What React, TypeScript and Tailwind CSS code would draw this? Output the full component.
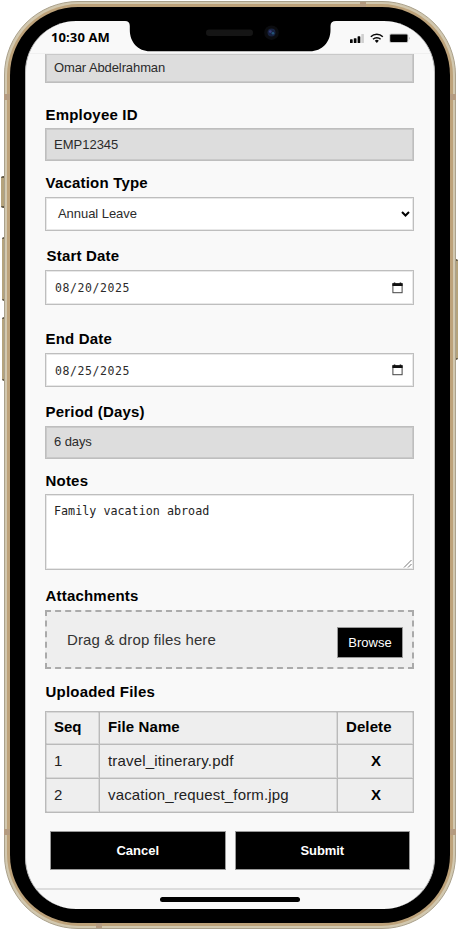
import React from "react";

function Label({ children, className = "" }: { children: React.ReactNode; className?: string }) {
  return (
    <label className={"block h-5 whitespace-nowrap pl-[0.5px] text-[15px] leading-5 font-bold tracking-[0.2px] text-black " + className}>
      {children}
    </label>
  );
}

function Field({ children, className = "" }: { children: React.ReactNode; className?: string }) {
  return (
    <div className={"flex items-center border border-[#bebebe] whitespace-nowrap text-[#2b2b2b] shadow-[inset_0_0_0_1px_rgba(0,0,0,0.09)] " + className}>
      {children}
    </div>
  );
}

function CalendarIcon() {
  return (
    <svg className="mt-[-3px] mr-[10px] ml-auto h-3 w-[11px]" viewBox="0 0 11 12">
      <rect x="0.9" y="1.8" width="9.2" height="8.9" fill="none" stroke="#444" strokeWidth="1" />
      <path d="M0.4 1.3H10.6V3.9H0.4ZM1.8 0.4h1.5v1.2H1.8ZM7.7 0.4h1.5v1.2H7.7Z" fill="#111" />
    </svg>
  );
}

function StatusIcons() {
  return (
    <svg className="mt-px ml-auto h-[14px] w-[64px]" viewBox="0 0 64 14">
      <g fill="#050505">
        <rect x="1" y="8.3" width="2.7" height="3.7" rx="0.6" />
        <rect x="4.8" y="7.2" width="2.7" height="4.8" rx="0.6" />
        <rect x="8.6" y="5.3" width="2.7" height="6.7" rx="0.6" />
        <rect x="12.3" y="3" width="2.6" height="9" rx="0.6" fill="#cfcfcf" />
      </g>
      <g fill="none" stroke="#080808" strokeWidth="1.5">
        <path d="M21.8 5.7a8.6 8.6 0 0 1 12 0" />
        <path d="M24 8.2a5.5 5.5 0 0 1 7.6 0" />
      </g>
      <path d="M27.8 11.9l-2-2.1a2.9 2.9 0 0 1 4 0Z" fill="#080808" />
      <rect x="40.2" y="2.5" width="19.2" height="9.4" rx="2" fill="#c8c8c8" />
      <rect x="41.2" y="3.5" width="17.2" height="7.4" rx="1" fill="#000" />
      <path d="M60.2 5.7q1.4 1.5 0 3Z" fill="#999" />
    </svg>
  );
}

function Notch() {
  return (
    <svg className="absolute top-[-1px] left-[99px] h-[33px] w-[211px]" viewBox="0 0 211 33">
      <path d="M0 0H211V1Q205.5 1 205.5 6V10C205.5 22 197 31.3 185 31.3H25C13 31.3 4.8 22 4.8 10V6Q4.8 1 0 1Z" fill="#000" />
      <rect x="81" y="9.5" width="47" height="6.5" rx="3.2" fill="#151515" />
      <circle cx="146.5" cy="12.7" r="7.3" fill="#0b0c0f" />
      <circle cx="146.5" cy="12.5" r="4" fill="#17213f" />
      <circle cx="145.3" cy="11.6" r="1.4" fill="#343c78" />
      <circle cx="148" cy="13.2" r="1.3" fill="#245578" />
    </svg>
  );
}

function Files() {
  const files = ["travel_itinerary.pdf", "vacation_request_form.jpg"];
  return (
    <div className="mt-[9px] grid h-[102px] grid-cols-[54px_238px_76px] grid-rows-[33px_34px_34px] border-t border-l border-[#bababa] bg-[#eee] text-[15px] whitespace-nowrap text-[#222] shadow-[inset_1px_1px_0_rgba(0,0,0,0.09)] *:flex *:items-center *:border-r *:border-b *:border-[#bababa] *:pb-px *:pl-2 *:shadow-[inset_-1px_-1px_0_rgba(0,0,0,0.09)]">
      <div className="font-bold text-black">Seq</div>
      <div className="font-bold tracking-[0.1px] text-black">File Name</div>
      <div className="font-bold tracking-[0.1px] text-black">Delete</div>
      {files.map((file, i) => (
        <React.Fragment key={file}>
          <div>{i + 1}</div>
          <div className="tracking-[0.16px]">{file}</div>
          <div className="justify-center pr-[7px] text-[15px] font-bold text-black">X</div>
        </React.Fragment>
      ))}
    </div>
  );
}

export default function App() {
  return (
    <div className="relative h-[929px] w-[458px] overflow-hidden bg-white font-['Liberation_Sans',Arial,sans-serif]">
      <div className="absolute top-[176px] left-[1px] h-[32px] w-[5px] rounded-l-xs border-y-2 border-[#655b46] bg-[#b5a37c]" />
      <div className="absolute top-[237px] left-[2px] h-[64px] w-[5px] rounded-l-xs border-y-2 border-[#655b46] bg-[#b5a37c]" />
      <div className="absolute top-[317px] left-[2px] h-[64px] w-[5px] rounded-l-xs border-y-2 border-[#655b46] bg-[#b5a37c]" />
      <div className="absolute top-[259px] left-[453px] h-[101px] w-[5px] rounded-r-xs border-y-2 border-[#655b46] bg-[#b5a37c]" />
      <div className="relative ml-1 h-full pt-px">
        <div className="h-[928px] w-[452px] rounded-[74px] border border-[#aaa18c] bg-[#d2c8af] p-[2px]">
          <div className="h-full rounded-[72px] bg-[#bda27a] p-[3px]">
            <div className="h-full rounded-[68px] bg-black pt-[14px] pl-[15px]">
              <main className="relative flex h-[888px] w-[410px] flex-col overflow-hidden rounded-[51px] border-x border-[#bbb] bg-[#f9f9f9]">
                <Notch />
                <header className="flex h-[33px] shrink-0 items-center border-b border-[#f0f0f0] pr-[21px] pl-[25px]">
                  <span className="mt-px font-['Open_Sans',sans-serif] text-[13px] font-bold tracking-[0.1px] whitespace-nowrap text-black">10:30 AM</span>
                  <StatusIcons />
                </header>
                <section className="ml-[19px] w-[369px]">
                  <Field className="h-[29px] border-t-0 bg-[#ddd] pb-[1px] pl-[8px] text-[13px] tracking-[-0.1px]">Omar Abdelrahman</Field>
                  <Label className="mt-[22px]">Employee ID</Label>
                  <Field className="mt-[3px] h-[33px] bg-[#ddd] pl-[8px] text-[13px]">EMP12345</Field>
                  <Label className="mt-[12px]">Vacation Type</Label>
                  <Field className="mt-[4px] h-[34px] bg-white pl-[12px] text-[13px] tracking-[-0.05px]">
                    Annual Leave
                    <svg className="mr-[3px] ml-auto h-2 w-[9px]" viewBox="0 0 9 8">
                      <path d="M1 2L4.5 5.5L8 2" fill="none" stroke="#000" strokeWidth="2" />
                    </svg>
                  </Field>
                  <Label className="mt-[15px] pl-[1.5px]">Start Date</Label>
                  <Field className="mt-[4px] h-[35px] bg-white pt-[3px] pl-[9px] font-['DejaVu_Sans_Mono',monospace] text-[11.5px] tracking-[0.57px]">
                    08/20/2025
                    <CalendarIcon />
                  </Field>
                  <Label className="mt-[24px]">End Date</Label>
                  <Field className="mt-[4px] h-[34px] bg-white pt-[3px] pl-[9px] font-['DejaVu_Sans_Mono',monospace] text-[11.5px] tracking-[0.57px]">
                    08/25/2025
                    <CalendarIcon />
                  </Field>
                  <Label className="mt-[15px]">Period (Days)</Label>
                  <Field className="mt-[4px] h-[33px] bg-[#ddd] pb-px pl-[8px] text-[13px] tracking-[-0.1px]">6 days</Field>
                  <Label className="mt-[12px]">Notes</Label>
                  <div className="mt-[3px] flex h-[76px] border border-[#bebebe] bg-white pt-[8px] pl-[8px] font-['DejaVu_Sans_Mono',monospace] text-[11.7px] leading-4 tracking-[0.02px] whitespace-nowrap text-[#222] shadow-[inset_0_0_0_1px_rgba(0,0,0,0.09)]">
                    Family vacation abroad
                    <svg className="mt-auto mr-px mb-px ml-auto h-[9px] w-[9px]" viewBox="0 0 9 9">
                      <path d="M1 8.5L8.5 1M5 8.5L8.5 5" stroke="#777" strokeWidth="1" />
                    </svg>
                  </div>
                  <Label className="mt-[16px]">Attachments</Label>
                  <div className="mt-[4px] flex h-[59px] items-center border-2 border-dashed border-[#aaa] bg-[#eee] pr-[9px] pl-[20px]">
                    <span className="mt-px text-[15px] tracking-[0.14px] whitespace-nowrap text-[#333]">Drag &amp; drop files here</span>
                    <button className="mt-[6px] ml-auto h-[31px] w-[66px] border border-[#999] bg-black text-[13px] text-white">Browse</button>
                  </div>
                  <Label className="mt-[13px]">Uploaded Files</Label>
                  <Files />
                </section>
                <div className="mt-[18px] ml-[24px] grid w-[360px] grid-cols-2 gap-[9px] text-[13px] font-bold text-white">
                  <button className="h-[39px] border border-[#999] bg-black">Cancel</button>
                  <button className="h-[39px] border border-[#999] bg-black tracking-[-0.1px]">Submit</button>
                </div>
                <footer className="mt-auto flex h-[21px] shrink-0 justify-center border-t-2 border-[#ddd] pt-[7px]">
                  <div className="h-[5px] w-[140px] rounded-full bg-black" />
                </footer>
              </main>
            </div>
          </div>
        </div>
        <div className="absolute top-[94px] left-0 h-[6px] w-[6px] bg-[#b49b80]" />
        <div className="absolute top-[94px] left-[446px] h-[6px] w-[6px] bg-[#b49b80]" />
        <div className="absolute top-[829px] left-0 h-[6px] w-[6px] bg-[#b49b80]" />
        <div className="absolute top-[829px] left-[446px] h-[6px] w-[6px] bg-[#b49b80]" />
        <div className="absolute top-[2px] left-[356px] h-[5px] w-[6px] bg-[#b49b80]" />
        <div className="absolute top-[923px] left-[92px] h-[5px] w-[6px] bg-[#b49b80]" />
      </div>
    </div>
  );
}
